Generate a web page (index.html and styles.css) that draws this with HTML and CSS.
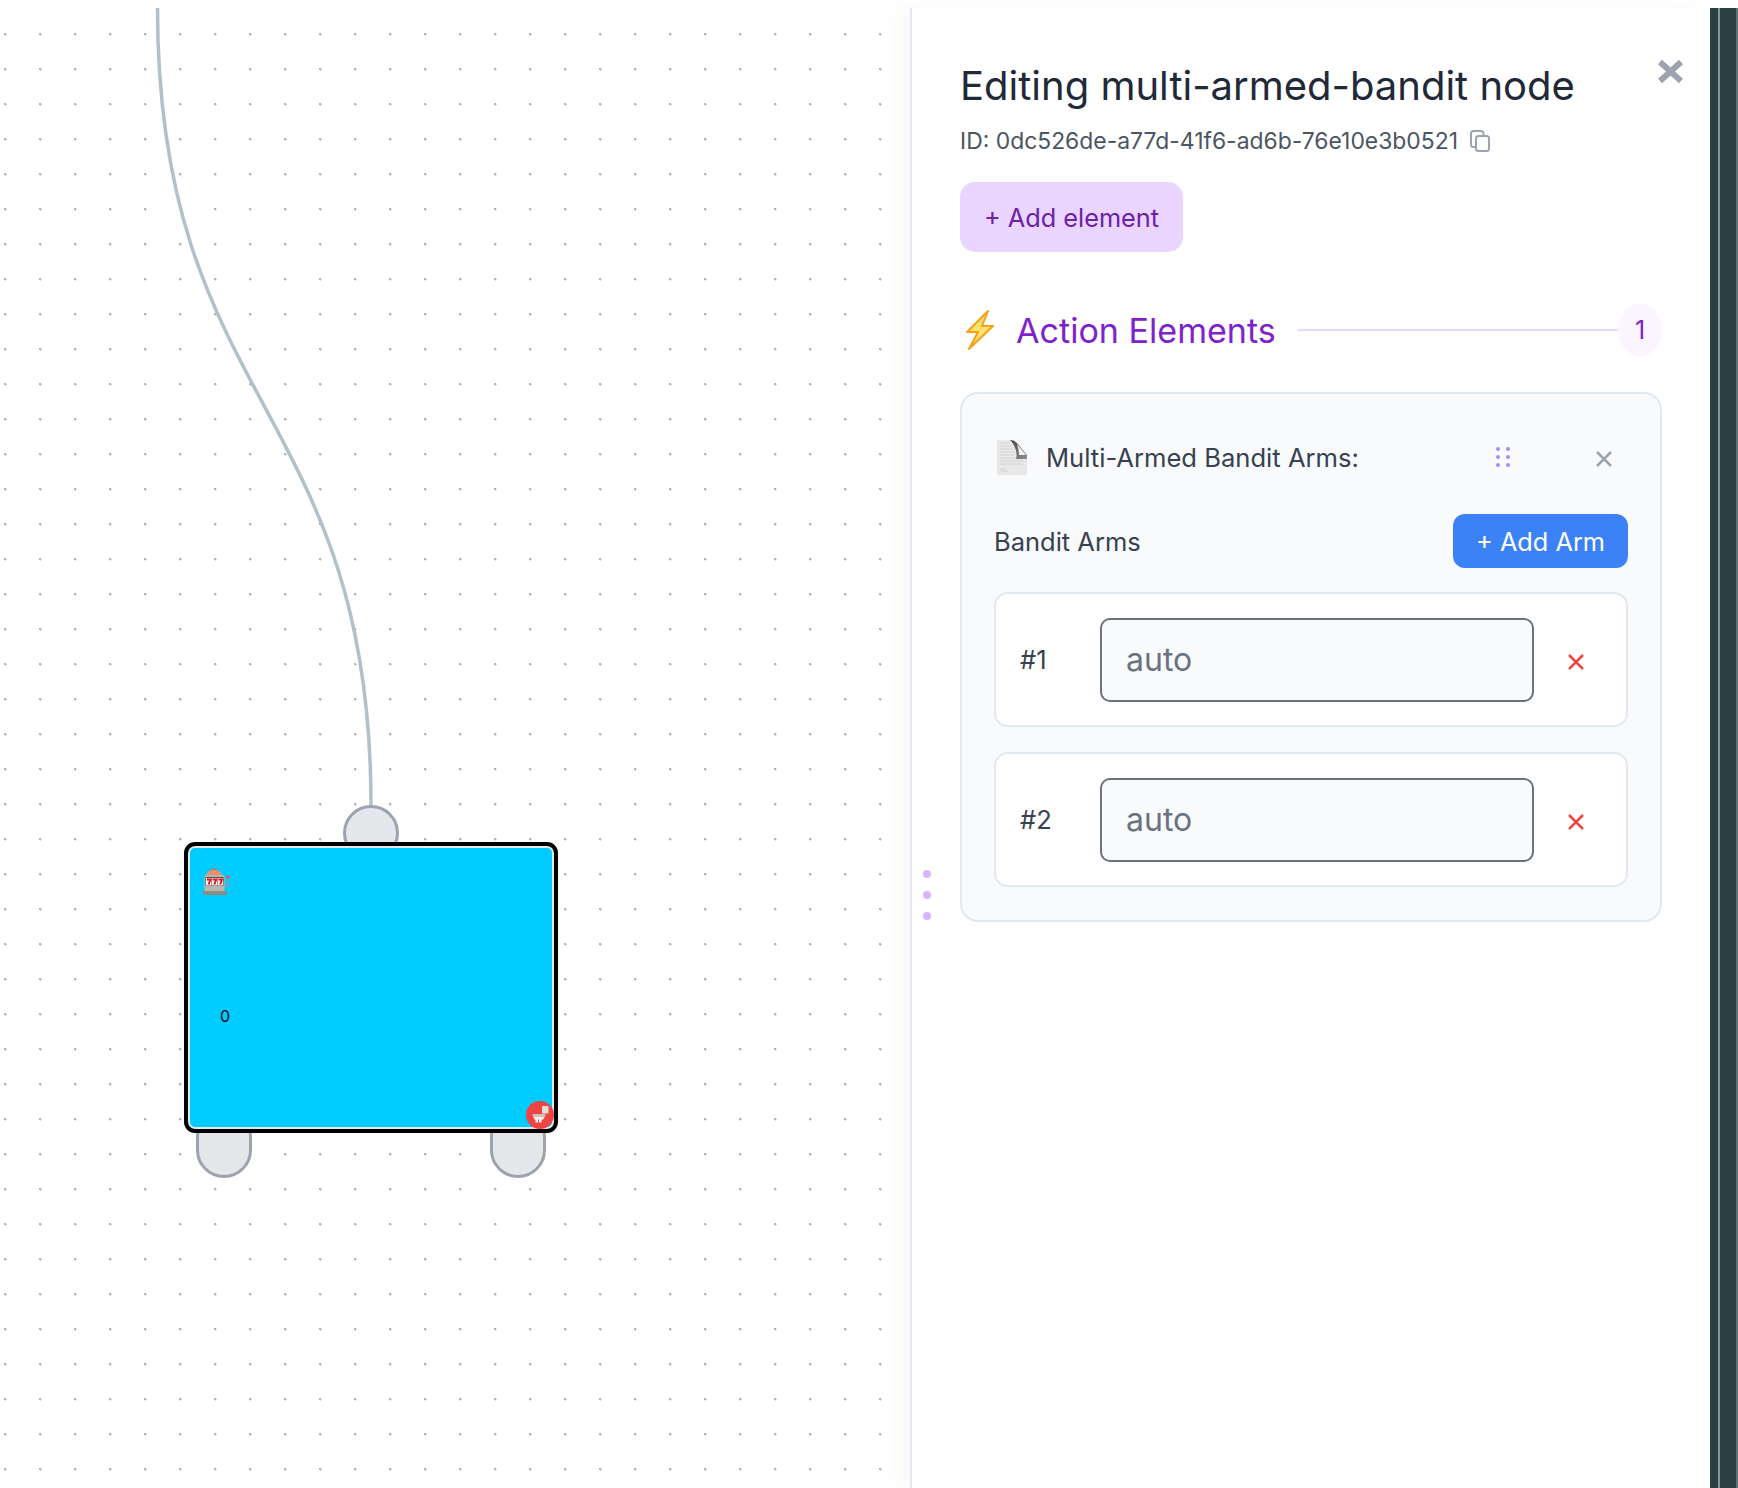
FILE: index.html
```html
<!DOCTYPE html>
<html lang="en">
<head>
    <meta charset="UTF-8">
    <title>Editing node</title>
    <link rel="stylesheet" href="styles.css">
</head>
<body>
    <div class="app">
        <main class="canvas">
            <svg class="edge" width="400" height="820" viewBox="0 0 400 820">
                <path d="M157.500 0 C157.500 398 371 398 371 797" fill="none" stroke="#b1c1ca" stroke-width="3.500"/>
            </svg>

            <div class="handle handle-top"></div>
            <div class="handle handle-left"></div>
            <div class="handle handle-right"></div>

            <div class="node">
                <svg class="node-emoji" width="30" height="30" viewBox="0 0 30 30">
                    <path d="M8.500 1.500h5v2h-5z" fill="#d9694c"/>
                    <path d="M3 9c0-4 4-6 8-6s8 2 8 6z" fill="#ef8f6c"/>
                    <rect x="1.500" y="8" width="20" height="17" rx="1.500" fill="#b9b6af"/>
                    <rect x="2.500" y="10" width="18" height="9" fill="#56544f"/>
                    <rect x="3" y="11" width="5.300" height="7.500" fill="#f7f5f0"/>
                    <rect x="8.800" y="11" width="5.300" height="7.500" fill="#f7f5f0"/>
                    <rect x="14.600" y="11" width="5.300" height="7.500" fill="#f7f5f0"/>
                    <path d="M3.800 12.500h3.600l-1.800 5M9.600 12.500h3.600l-1.800 5M15.400 12.500h3.600l-1.800 5" fill="none" stroke="#e0141c" stroke-width="1.900"/>
                    <path d="M22 19h3v-8" fill="none" stroke="#9a988f" stroke-width="1.500"/>
                    <circle cx="25" cy="10" r="1.700" fill="#ef5350"/>
                    <rect x="0" y="24" width="24" height="4" rx="1" fill="#8f8c85"/>
                </svg>
                <span class="node-value">0</span>
                <div class="node-delete">
                    <svg width="28" height="28" viewBox="0 0 28 28">
                        <rect x="16" y="5" width="6.500" height="7.500" rx="1" fill="#e4e1da"/>
                        <rect x="6.500" y="13" width="13" height="2.500" rx="1.200" fill="#c9c6be"/>
                        <path d="M7.500 15.500h11c0 2-1 3-3 3.500v2.500h-6V19c-1-.5-2-1.500-2-3.500z" fill="#f3f1ec"/>
                        <path d="M12.500 18.500v3" stroke="#ef4444" stroke-width="1"/>
                    </svg>
                </div>
            </div>
        </main>

        <aside class="panel">
            <span class="resize-dots"><i></i><i></i><i></i></span>

            <button class="panel-close" type="button">
                <svg width="27" height="27" viewBox="0 0 27 27">
                    <path d="M3 4l21 19M24 4L3 23" stroke="#9ca3af" stroke-width="6"/>
                </svg>
            </button>

            <h1 class="panel-title">Editing multi-armed-bandit node</h1>
            <p class="node-id">
                ID: 0dc526de-a77d-41f6-ad6b-76e10e3b0521
                <svg width="22" height="22" viewBox="0 0 22 22" fill="none" stroke="#9ca3af" stroke-width="2">
                    <rect x="7" y="6" width="13" height="15" rx="2.500"/>
                    <path d="M7 17H4.500A2.500 2.500 0 0 1 2 14.500V3.500A2.500 2.500 0 0 1 4.500 1H12a2.500 2.500 0 0 1 2.500 2.500V6"/>
                </svg>
            </p>

            <button class="add-element" type="button">+ Add element</button>

            <div class="section-head">
                <svg width="32" height="40" viewBox="0 0 32 40">
                    <path d="M24 1L3 22h11L5 39l24-23H18z" fill="#ffe36e" stroke="#f7a01c" stroke-width="2" stroke-linejoin="round"/>
                </svg>
                <h2>Action Elements</h2>
                <span class="section-line"></span>
                <span class="section-count">1</span>
            </div>

            <section class="card">
                <div class="card-head">
                    <svg class="doc-icon" width="30" height="35" viewBox="0 0 30 35">
                        <defs>
                            <linearGradient id="fold" x1="0" y1="0" x2="1" y2="1">
                                <stop offset="0" stop-color="#4a4a4a"/>
                                <stop offset="1" stop-color="#8c8c8c"/>
                            </linearGradient>
                        </defs>
                        <path d="M0 0h13l17 18v17H0z" fill="#e8e8e8"/>
                        <path d="M3 3h9M3 6h11M3 9h13M3 12h14M3 15h15M3 18h24M3 21h24M3 24h22M3 29h6M3 31h8" stroke="#d2d2d2" stroke-width="1.200"/>
                        <path d="M13 0c3 0 5 1 7 3l10 12v4H19c2-6-1-14-6-19z" fill="url(#fold)"/>
                        <path d="M20 4l9 11h-7c0-4-1-8-2-11z" fill="#f1f1f1"/>
                    </svg>
                    <h3>Multi-Armed Bandit Arms:</h3>
                    <span class="grip"><i></i><i></i><i></i><i></i><i></i><i></i></span>
                    <button class="card-close" type="button">
                        <svg width="16" height="16" viewBox="0 0 16 16">
                            <path d="M1 1l14 14M15 1L1 15" stroke="#9ca3af" stroke-width="2.500"/>
                        </svg>
                    </button>
                </div>

                <div class="arms-head">
                    <span>Bandit Arms</span>
                    <button class="add-arm" type="button">+ Add Arm</button>
                </div>

                <div class="arm">
                    <span class="arm-label">#1</span>
                    <input class="arm-input" type="text" value="auto">
                    <button class="arm-remove" type="button">
                        <svg width="16" height="16" viewBox="0 0 16 16">
                            <path d="M1 1l14 14M15 1L1 15" stroke="#ef4444" stroke-width="2.500"/>
                        </svg>
                    </button>
                </div>

                <div class="arm">
                    <span class="arm-label">#2</span>
                    <input class="arm-input" type="text" value="auto">
                    <button class="arm-remove" type="button">
                        <svg width="16" height="16" viewBox="0 0 16 16">
                            <path d="M1 1l14 14M15 1L1 15" stroke="#ef4444" stroke-width="2.500"/>
                        </svg>
                    </button>
                </div>
            </section>
        </aside>

        <div class="side-strip"></div>
    </div>
</body>
</html>
```

FILE: styles.css
```css
* {
    box-sizing: border-box;
}

html, body {
    height: 100%;
}

body {
    display: flex;
    margin: 0;
    padding-top: 8px;
    background: #fff;
    font-family: "Inter", sans-serif;
    color: #1f2937;
    overflow: hidden;
}

button {
    font-family: inherit;
    border: 0;
    background: none;
    padding: 0;
    cursor: pointer;
}

.app {
    display: flex;
    flex: 1;
    min-width: 0;
}

/* flow canvas */
.canvas {
    position: relative;
    width: 910px;
    flex: none;
    background-image: radial-gradient(circle at 1.25px 1.25px, #b4b4b8 1.1px, transparent 1.5px);
    background-size: 35px 35px;
    background-position: 4px 25px;
}

.edge {
    position: absolute;
    left: 0;
    top: 0;
}

.node {
    position: absolute;
    left: 184px;
    top: 834px;
    width: 374px;
    height: 291px;
    background: #00ccff;
    border: 4px solid #000;
    border-radius: 11px;
    box-shadow: inset 0 0 0 2px #e5e7eb;
}

.node-emoji {
    position: absolute;
    left: 15px;
    top: 21px;
}

.node-value {
    position: absolute;
    left: 32px;
    top: 160px;
    font-size: 16px;
    color: #000;
}

.node-delete {
    position: absolute;
    right: 0;
    bottom: 0;
    width: 28px;
    height: 28px;
    border-radius: 50%;
    background: #ef4444;
    line-height: 0;
}

.handle {
    position: absolute;
    width: 56px;
    height: 56px;
    border-radius: 28px;
    background: #e5e7eb;
    border: 3px solid #9ca3af;
}

.handle-top {
    left: 343px;
    top: 797px;
}

.handle-left,
.handle-right {
    top: 1100px;
    height: 70px;
}

.handle-left {
    left: 196px;
}

.handle-right {
    left: 490px;
}

/* side panel */
.panel {
    position: relative;
    width: 800px;
    flex: none;
    padding: 54px 48px 0 48px;
    background: #fff;
    border-left: 2px solid #e2e8f0;
    box-shadow: -12px 0 18px rgba(0, 0, 0, .03);
}

.resize-dots {
    position: absolute;
    left: 11px;
    top: 862px;
    display: flex;
    flex-direction: column;
    gap: 13px;
}

.resize-dots i {
    display: block;
    width: 8px;
    height: 8px;
    border-radius: 50%;
    background: #d8b4fe;
}

.panel-close {
    position: absolute;
    right: 26px;
    top: 50px;
    line-height: 0;
}

.panel-title {
    margin: 0;
    font-size: 40px;
    line-height: 48px;
    font-weight: 400;
    color: #1f2937;
}

.node-id {
    display: flex;
    align-items: center;
    gap: 11px;
    margin: 17px 0 0;
    font-size: 22.900px;
    line-height: 28px;
    color: #4b5563;
}

.add-element {
    display: block;
    margin-top: 27px;
    width: 223px;
    height: 70px;
    border-radius: 15px;
    background: #e9d5ff;
    color: #6b21a8;
    font-size: 25.300px;
    font-weight: 400;
}

.section-head {
    display: flex;
    align-items: center;
    margin-top: 50px;
    height: 56px;
}

.section-head svg {
    flex: none;
    margin-left: 4px;
}

.section-head h2 {
    margin: 0 22px 0 20px;
    font-size: 34.100px;
    font-weight: 400;
    color: #7e22ce;
}

.section-line {
    flex: 1;
    height: 2px;
    background: #e9d5ff;
}

.section-count {
    flex: none;
    width: 44px;
    height: 54px;
    border-radius: 50%;
    background: #faf5ff;
    color: #7e22ce;
    font-size: 25px;
    display: flex;
    align-items: center;
    justify-content: center;
}

.card {
    margin-top: 34px;
    width: 702px;
    height: 530px;
    padding: 32px;
    background: #f8fafc;
    border: 2px solid #e2e8f0;
    border-radius: 18px;
}

.card-head {
    display: flex;
    align-items: center;
    height: 50px;
    margin-top: 6px;
}

.doc-icon {
    flex: none;
    margin-left: 3px;
    filter: blur(.4px);
}

.card-head h3 {
    margin: 0 0 0 19px;
    font-size: 25.600px;
    font-weight: 400;
    color: #374151;
}

.grip {
    display: grid;
    grid-template-columns: 4px 4px;
    column-gap: 6px;
    row-gap: 4px;
    margin-left: auto;
    margin-right: 86px;
}

.grip i {
    display: block;
    width: 4px;
    height: 4px;
    border-radius: 50%;
    background: #a78bfa;
}

.card-close {
    line-height: 0;
    margin-right: 16px;
    margin-top: 4px;
}

.arms-head {
    display: flex;
    align-items: center;
    justify-content: space-between;
    margin-top: 32px;
    font-size: 25.500px;
    color: #374151;
}

.add-arm {
    width: 175px;
    height: 54px;
    border-radius: 12px;
    background: #3b82f6;
    color: #fff;
    font-size: 25.300px;
    font-weight: 400;
}

.arm {
    display: flex;
    align-items: center;
    height: 135px;
    margin-top: 24px;
    padding: 0 24px;
    background: #fff;
    border: 2px solid #e2e8f0;
    border-radius: 14px;
}

.arm + .arm {
    margin-top: 25px;
}

.arm-label {
    flex: none;
    width: 80px;
    font-size: 25.500px;
    color: #374151;
}

.arm-input {
    flex: none;
    width: 434px;
    height: 84px;
    padding: 0 24px;
    background: #f9fafb;
    border: 2px solid #6b7280;
    border-radius: 10px;
    font-family: inherit;
    font-size: 32px;
    color: #6b7280;
}

.arm-remove {
    line-height: 0;
    margin-left: 34px;
    margin-top: 4px;
}

.side-strip {
    flex: 1;
    background: #2b4045;
    background-image: linear-gradient(90deg, transparent 8px, #8a9599 8px, #8a9599 10px, transparent 10px, transparent 26px, #5f7276 26px);
}
```
